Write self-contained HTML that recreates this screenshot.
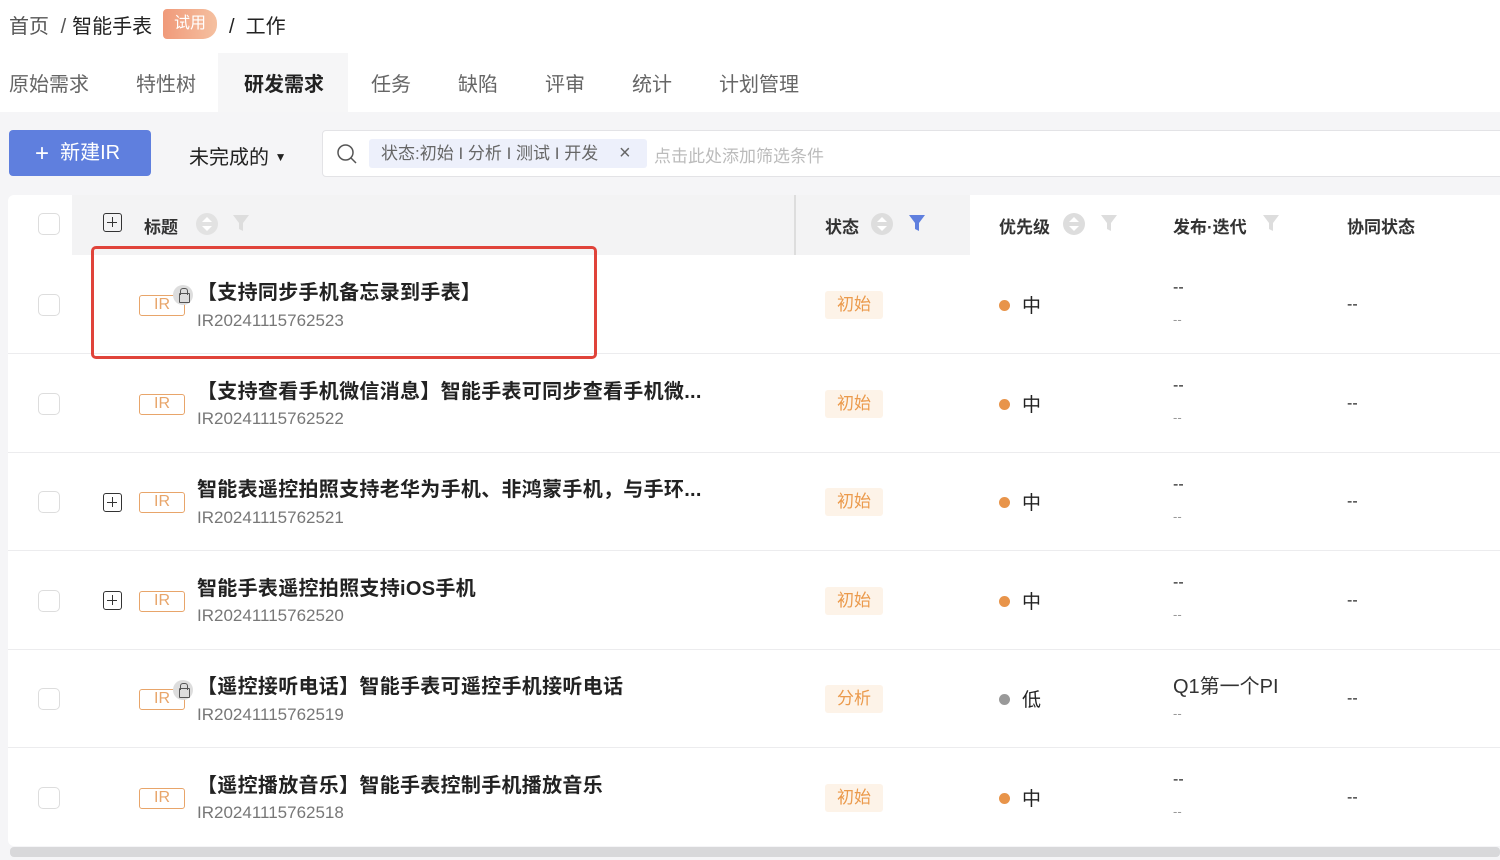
<!DOCTYPE html>
<html><head><meta charset="utf-8"><style>
*{margin:0;padding:0;box-sizing:border-box}
body{width:1500px;height:860px;overflow:hidden;background:#f5f5f7;font-family:"Liberation Sans","Noto Sans CJK SC",sans-serif;color:#222;position:relative}
.a{position:absolute;white-space:nowrap}
.top{position:absolute;left:0;top:0;width:1500px;height:112px;background:#fff}
.tab{font-size:20px;color:#666;top:68px}
.cb{position:absolute;width:22px;height:22px;border:1.5px solid #ddd;border-radius:5px;background:#fff}
.ir{position:absolute;width:46px;height:21px;border:1.5px solid #e8a56a;border-radius:3px;color:#e8a56a;font-size:16px;text-align:center;line-height:18px}
.plus{position:absolute;width:19px;height:19px;border:1.5px solid #333;border-radius:3px}
.plus:before{content:"";position:absolute;left:3px;top:7.5px;width:10px;height:1.5px;background:#333}
.plus:after{content:"";position:absolute;left:7.5px;top:3px;width:1.5px;height:10px;background:#333}
.t{font-size:20px;font-weight:bold;color:#222;letter-spacing:0.3px}
.id{font-size:17px;color:#777}
.st{position:absolute;width:58px;height:28px;background:#fdf3e8;color:#eb9a4c;font-size:17px;text-align:center;line-height:28px;border-radius:3px}
.dot{position:absolute;width:11px;height:11px;border-radius:50%;background:#e8944a}
.lock{position:absolute;width:20px;height:20px;border-radius:50%;background:#ddd}
.lock:before{content:"";position:absolute;left:5.5px;top:8px;width:9px;height:8px;border:1.3px solid #555;border-radius:1px}
.lock:after{content:"";position:absolute;left:7px;top:3px;width:6px;height:6px;border:1.3px solid #555;border-bottom:none;border-radius:3px 3px 0 0}
.hd{font-size:17px;font-weight:bold;color:#333;top:213px}
.sort{position:absolute;width:22px;height:22px;border-radius:50%;background:#ddd;top:213px}
.sort:before{content:"";position:absolute;left:6px;top:4px;border:5px solid transparent;border-bottom:5px solid #fff;border-top:0}
.sort:after{content:"";position:absolute;left:6px;top:13px;border:5px solid transparent;border-top:5px solid #fff;border-bottom:0}
.fil{position:absolute;top:213px}
.m{font-size:19px;margin-top:-3px}
</style></head><body>
<div class="top"></div>
<div class="a" style="left:9px;top:10px;font-size:20px;color:#555">首页 <span style="margin:0 6px">/</span><span style="color:#222">智能手表</span></div>
<div class="a" style="left:163px;top:9px;width:54px;height:30px;background:linear-gradient(90deg,#f09a7a,#f5c0a0);border-radius:4px 14px 14px 4px;color:#fff;font-size:16px;line-height:30px;text-align:center">试用</div>
<div class="a" style="left:229px;top:10px;font-size:20px;color:#222">/ &nbsp;工作</div>
<div class="a" style="left:218px;top:53px;width:130px;height:59px;background:#f6f6f7"></div>
<div class="a tab" style="left:9px">原始需求</div>
<div class="a tab" style="left:136px">特性树</div>
<div class="a tab" style="left:244px;color:#222;font-weight:bold">研发需求</div>
<div class="a tab" style="left:371px">任务</div>
<div class="a tab" style="left:458px">缺陷</div>
<div class="a tab" style="left:545px">评审</div>
<div class="a tab" style="left:632px">统计</div>
<div class="a tab" style="left:719px">计划管理</div>
<div class="a" style="left:9px;top:130px;width:142px;height:46px;background:#5f7fde;border-radius:4px;color:#fff;font-size:20px;line-height:46px;padding-left:26px"><span style="font-size:24px;font-weight:300;vertical-align:-2px">+</span>&nbsp; 新建IR</div>
<div class="a" style="left:189px;top:141px;font-size:20px;color:#222">未完成的 <span style="font-size:12px;vertical-align:3px">▼</span></div>
<div class="a" style="left:322px;top:130px;width:1190px;height:47px;background:#fff;border:1.5px solid #e3e3e6;border-radius:4px"></div>
<svg class="a" style="left:336px;top:143px" width="22" height="22"><circle cx="9.5" cy="9.5" r="7.5" fill="none" stroke="#555" stroke-width="1.5"/><line x1="15" y1="15" x2="20" y2="20" stroke="#555" stroke-width="1.5"/></svg>
<div class="a" style="left:369px;top:139px;width:278px;height:29px;background:#edf0fb;border-radius:3px;color:#666;font-size:17px;line-height:29px;padding-left:12px">状态:初始 I 分析 I 测试 I 开发 <span style="position:absolute;left:250px;font-size:20px;color:#666">×</span></div>
<div class="a" style="left:654px;top:142px;font-size:17px;color:#bbb">点击此处添加筛选条件</div>
<!-- table -->
<div class="a" style="left:8px;top:195px;width:1500px;height:651px;background:#fff;border-radius:6px"></div>
<div class="a" style="left:72px;top:195px;width:898px;height:60px;background:#f3f3f4"></div>
<div class="a" style="left:794px;top:195px;width:2px;height:60px;background:#ddd"></div>
<div class="cb" style="left:38px;top:213px"></div>
<div class="plus" style="left:103px;top:213px"></div>
<div class="a hd" style="left:144px">标题</div>
<div class="sort" style="left:196px;background:#e2e2e2"></div>
<svg class="fil" style="left:231px" width="20" height="20"><path d="M2 2h16l-6 8v8l-4-2v-6z" fill="#ddd"/></svg>
<div class="a hd" style="left:825px">状态</div>
<div class="sort" style="left:871px"></div>
<svg class="fil" style="left:907px" width="20" height="20"><path d="M2 2h16l-6 8v8l-4-2v-6z" fill="#5f7fde"/></svg>
<div class="a hd" style="left:999px">优先级</div>
<div class="sort" style="left:1063px"></div>
<svg class="fil" style="left:1099px" width="20" height="20"><path d="M2 2h16l-6 8v8l-4-2v-6z" fill="#ddd"/></svg>
<div class="a hd" style="left:1173px">发布·迭代</div>
<svg class="fil" style="left:1261px" width="20" height="20"><path d="M2 2h16l-6 8v8l-4-2v-6z" fill="#ddd"/></svg>
<div class="a hd" style="left:1347px">协同状态</div>

<!-- rows -->
<div class="a" style="left:8px;top:353px;width:1500px;height:1px;background:#ececee"></div>
<div class="a" style="left:8px;top:452px;width:1500px;height:1px;background:#ececee"></div>
<div class="a" style="left:8px;top:550px;width:1500px;height:1px;background:#ececee"></div>
<div class="a" style="left:8px;top:649px;width:1500px;height:1px;background:#ececee"></div>
<div class="a" style="left:8px;top:747px;width:1500px;height:1px;background:#ececee"></div>

<div class="cb" style="left:38px;top:294px"></div>
<div class="ir" style="left:139px;top:295px">IR</div><div class="lock" style="left:173px;top:285px"></div>
<div class="a t" style="left:197px;top:276px">【支持同步手机备忘录到手表】</div>
<div class="a id" style="left:197px;top:311px">IR20241115762523</div>
<div class="st" style="left:825px;top:291px">初始</div><div class="dot" style="left:999px;top:300px"></div><div class="a m" style="left:1022px;top:294px">中</div>
<div class="a" style="left:1173px;top:279px;font-size:16px">--</div><div class="a" style="left:1173px;top:312px;font-size:13px;color:#999">--</div><div class="a" style="left:1347px;top:296px;font-size:16px">--</div>
<div class="a" style="left:91px;top:246px;width:506px;height:113px;border:3px solid #e0433a;border-radius:5px"></div>

<div class="cb" style="left:38px;top:393px"></div>
<div class="ir" style="left:139px;top:394px">IR</div>
<div class="a t" style="left:197px;top:375px">【支持查看手机微信消息】智能手表可同步查看手机微...</div>
<div class="a id" style="left:197px;top:409px">IR20241115762522</div>
<div class="st" style="left:825px;top:390px">初始</div><div class="dot" style="left:999px;top:399px"></div><div class="a m" style="left:1022px;top:393px">中</div>
<div class="a" style="left:1173px;top:377px;font-size:16px">--</div><div class="a" style="left:1173px;top:410px;font-size:13px;color:#999">--</div><div class="a" style="left:1347px;top:395px;font-size:16px">--</div>

<div class="cb" style="left:38px;top:491px"></div>
<div class="plus" style="left:103px;top:493px"></div>
<div class="ir" style="left:139px;top:492px">IR</div>
<div class="a t" style="left:197px;top:473px">智能表遥控拍照支持老华为手机、非鸿蒙手机，与手环...</div>
<div class="a id" style="left:197px;top:508px">IR20241115762521</div>
<div class="st" style="left:825px;top:488px">初始</div><div class="dot" style="left:999px;top:497px"></div><div class="a m" style="left:1022px;top:491px">中</div>
<div class="a" style="left:1173px;top:476px;font-size:16px">--</div><div class="a" style="left:1173px;top:509px;font-size:13px;color:#999">--</div><div class="a" style="left:1347px;top:493px;font-size:16px">--</div>

<div class="cb" style="left:38px;top:590px"></div>
<div class="plus" style="left:103px;top:591px"></div>
<div class="ir" style="left:139px;top:591px">IR</div>
<div class="a t" style="left:197px;top:572px">智能手表遥控拍照支持iOS手机</div>
<div class="a id" style="left:197px;top:606px">IR20241115762520</div>
<div class="st" style="left:825px;top:587px">初始</div><div class="dot" style="left:999px;top:596px"></div><div class="a m" style="left:1022px;top:590px">中</div>
<div class="a" style="left:1173px;top:574px;font-size:16px">--</div><div class="a" style="left:1173px;top:607px;font-size:13px;color:#999">--</div><div class="a" style="left:1347px;top:592px;font-size:16px">--</div>

<div class="cb" style="left:38px;top:688px"></div>
<div class="ir" style="left:139px;top:689px">IR</div><div class="lock" style="left:173px;top:680px"></div>
<div class="a t" style="left:197px;top:670px">【遥控接听电话】智能手表可遥控手机接听电话</div>
<div class="a id" style="left:197px;top:705px">IR20241115762519</div>
<div class="st" style="left:825px;top:685px">分析</div><div class="dot" style="left:999px;top:694px;background:#999"></div><div class="a m" style="left:1022px;top:688px">低</div>
<div class="a" style="left:1173px;top:670px;font-size:20px;color:#333">Q1第一个PI</div><div class="a" style="left:1173px;top:706px;font-size:13px;color:#999">--</div><div class="a" style="left:1347px;top:690px;font-size:16px">--</div>

<div class="cb" style="left:38px;top:787px"></div>
<div class="ir" style="left:139px;top:788px">IR</div>
<div class="a t" style="left:197px;top:769px">【遥控播放音乐】智能手表控制手机播放音乐</div>
<div class="a id" style="left:197px;top:803px">IR20241115762518</div>
<div class="st" style="left:825px;top:784px">初始</div><div class="dot" style="left:999px;top:793px"></div><div class="a m" style="left:1022px;top:787px">中</div>
<div class="a" style="left:1173px;top:771px;font-size:16px">--</div><div class="a" style="left:1173px;top:804px;font-size:13px;color:#999">--</div><div class="a" style="left:1347px;top:789px;font-size:16px">--</div>

<div class="a" style="left:10px;top:847px;width:1490px;height:10px;background:#d8d8da;border-radius:4px"></div>
</body></html>
